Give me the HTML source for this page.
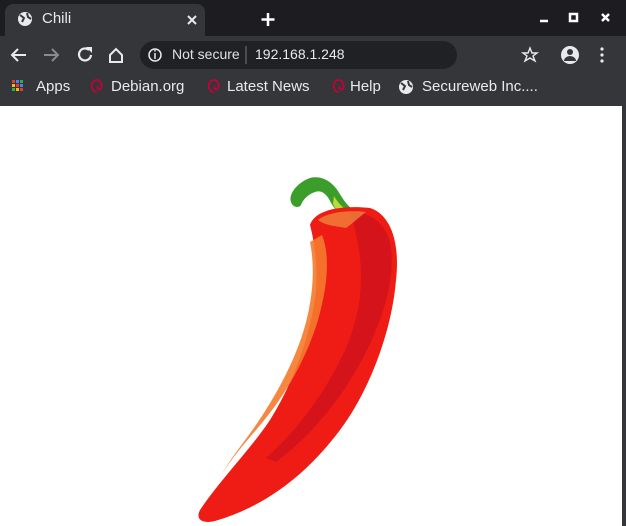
<!DOCTYPE html>
<html><head><meta charset="utf-8"><style>
*{margin:0;padding:0;box-sizing:border-box}
body{width:626px;height:526px;overflow:hidden;background:#fff;font-family:"Liberation Sans",sans-serif;position:relative}
.top{position:absolute;left:0;top:0;width:626px;height:36px;background:#1d1c21}
.tab{position:absolute;left:5px;top:4px;width:200px;height:34px;background:#35363a;border-radius:8px 8px 0 0}
.bar{position:absolute;left:0;top:36px;width:626px;height:70px;background:#35363a}
.omni{position:absolute;left:140px;top:41px;width:317px;height:28px;background:#202124;border-radius:14px}
.t{position:absolute;color:#e8eaed;font-size:15px;white-space:nowrap}
.edge{position:absolute;right:0;top:106px;width:4px;height:420px;background:#35363a}
</style></head><body>
<div class="top"></div>
<div class="tab"></div>
<div class="bar"></div>
<div class="omni"></div>
<svg style="position:absolute;left:0;top:0" width="626" height="106">
<circle cx="25" cy="19" r="7" fill="#e8eaed"/><path d="M20 15l4 3-2 4M27 13l1 4 3 2" stroke="#35363a" stroke-width="2" fill="none"/>
<path d="M188 16l8 8M196 16l-8 8" stroke="#e8eaed" stroke-width="2"/>
<path d="M268 13v13M261.5 19.5h13" stroke="#fff" stroke-width="2.5"/>
<path d="M446 21h8" stroke="#fff" stroke-width="2.5" transform="translate(94 0)"/><rect x="570" y="14" width="7" height="7" fill="none" stroke="#fff" stroke-width="2.5"/>
<path d="M602 14l7 7M609 14l-7 7" stroke="#fff" stroke-width="2.5"/>
<path d="M26 55H12M18 49l-6 6 6 6" stroke="#e8eaed" stroke-width="2" fill="none"/>
<path d="M58 55H44M52 49l6 6-6 6" stroke="#8a8b8e" stroke-width="2" fill="none"/>
<path d="M89 50a6 6 0 1 0 2 5" stroke="#e8eaed" stroke-width="2.2" fill="none"/><path d="M86 47h6v6z" fill="#e8eaed"/>
<path d="M110 55l6-6 6 6v7h-12z" stroke="#e8eaed" stroke-width="2" fill="none"/>
<g transform="translate(0 36)">
<circle cx="155" cy="19" r="6" fill="none" stroke="#e8eaed" stroke-width="1.5"/><path d="M155 17v6M155 14v1.5" stroke="#e8eaed" stroke-width="1.5"/>
<path d="M246 10v18" stroke="#777" stroke-width="1"/>
<path d="M530 12l2 5h5l-4 3 2 5-5-3-5 3 2-5-4-3h5z" fill="none" stroke="#e8eaed" stroke-width="1.4"/>
<circle cx="570" cy="19" r="9" fill="#e8eaed"/><circle cx="570" cy="16" r="3" fill="#35363a"/><path d="M564 25a6 5 0 0 1 12 0z" fill="#35363a"/>
<circle cx="602" cy="13" r="1.6" fill="#e8eaed"/><circle cx="602" cy="19" r="1.6" fill="#e8eaed"/><circle cx="602" cy="25" r="1.6" fill="#e8eaed"/>
<g><rect x="12" y="44" width="3" height="3" fill="#e53935"/><rect x="16" y="44" width="3" height="3" fill="#4285f4"/><rect x="20" y="44" width="3" height="3" fill="#34a853"/>
<rect x="12" y="48" width="3" height="3" fill="#fbbc05"/><rect x="16" y="48" width="3" height="3" fill="#e53935"/><rect x="20" y="48" width="3" height="3" fill="#4285f4"/>
<rect x="12" y="52" width="3" height="3" fill="#34a853"/><rect x="16" y="52" width="3" height="3" fill="#fbbc05"/><rect x="20" y="52" width="3" height="3" fill="#e53935"/></g>
<g fill="none" stroke="#c70036" stroke-width="1.8"><path d="M97 56a5 6 0 1 1 4-3 2 2 0 1 1-3-3"/><path d="M214 56a5 6 0 1 1 4-3 2 2 0 1 1-3-3"/><path d="M339 56a5 6 0 1 1 4-3 2 2 0 1 1-3-3"/></g>
<circle cx="406" cy="51" r="7" fill="#e8eaed"/><path d="M401 47l4 3-2 4M408 45l1 4 3 2" stroke="#35363a" stroke-width="2" fill="none"/>
</g>
</svg>
<div class="t" style="left:42px;top:10px">Chili</div>
<div class="t" style="left:172px;top:46px;font-size:14px;color:#dfe1e5">Not secure</div>
<div class="t" style="left:255px;top:46px;font-size:14px">192.168.1.248</div>
<div class="t" style="left:36px;top:78px">Apps</div>
<div class="t" style="left:111px;top:78px">Debian.org</div>
<div class="t" style="left:227px;top:78px">Latest News</div>
<div class="t" style="left:350px;top:78px">Help</div>
<div class="t" style="left:422px;top:78px">Secureweb Inc....</div>
<div class="edge"></div>
<svg style="position:absolute;left:0;top:0" width="626" height="526">
<path d="M291 202c-3-8 7-20 19-24 12-3 22 4 28 13 5 8 9 15 16 19l-10 7c-7-5-11-10-15-18-4-6-8-9-14-7-6 2-12 7-14 13-2 3-8 3-10-3z" fill="#3c9e2a"/>
<path d="M334 196c4 7 9 13 17 15l-4 6c-7-2-11-7-14-13z" fill="#c0d838"/>
<path d="M310 225C315 210 340 205 370 208C392 215 400 245 396 280C392 330 370 390 340 430C310 470 270 505 215 521C203 524 195 520 200 510C220 480 250 450 270 420C295 380 312 330 316 290C318 265 314 240 310 225Z" fill="#ee1c14"/>
<path d="M350 212c20 0 34 10 40 30 6 30-4 70-24 110-20 40-50 80-90 110l-10-4c34-30 62-70 80-110 16-38 22-80 4-136z" fill="#c50d20" opacity=".6"/>
<path d="M322 235c8 20 6 50-4 85-12 40-34 78-62 110-12 14-24 28-34 44 10-18 24-34 36-52 24-36 42-72 50-108 6-28 6-52 2-72z" fill="#f57a2c" opacity=".9"/>
<path d="M318 220c10-8 30-10 48-8-8 6-14 12-20 16-10-2-20-2-28-8z" fill="#f0833a" opacity=".8"/>
</svg>
</body></html>
